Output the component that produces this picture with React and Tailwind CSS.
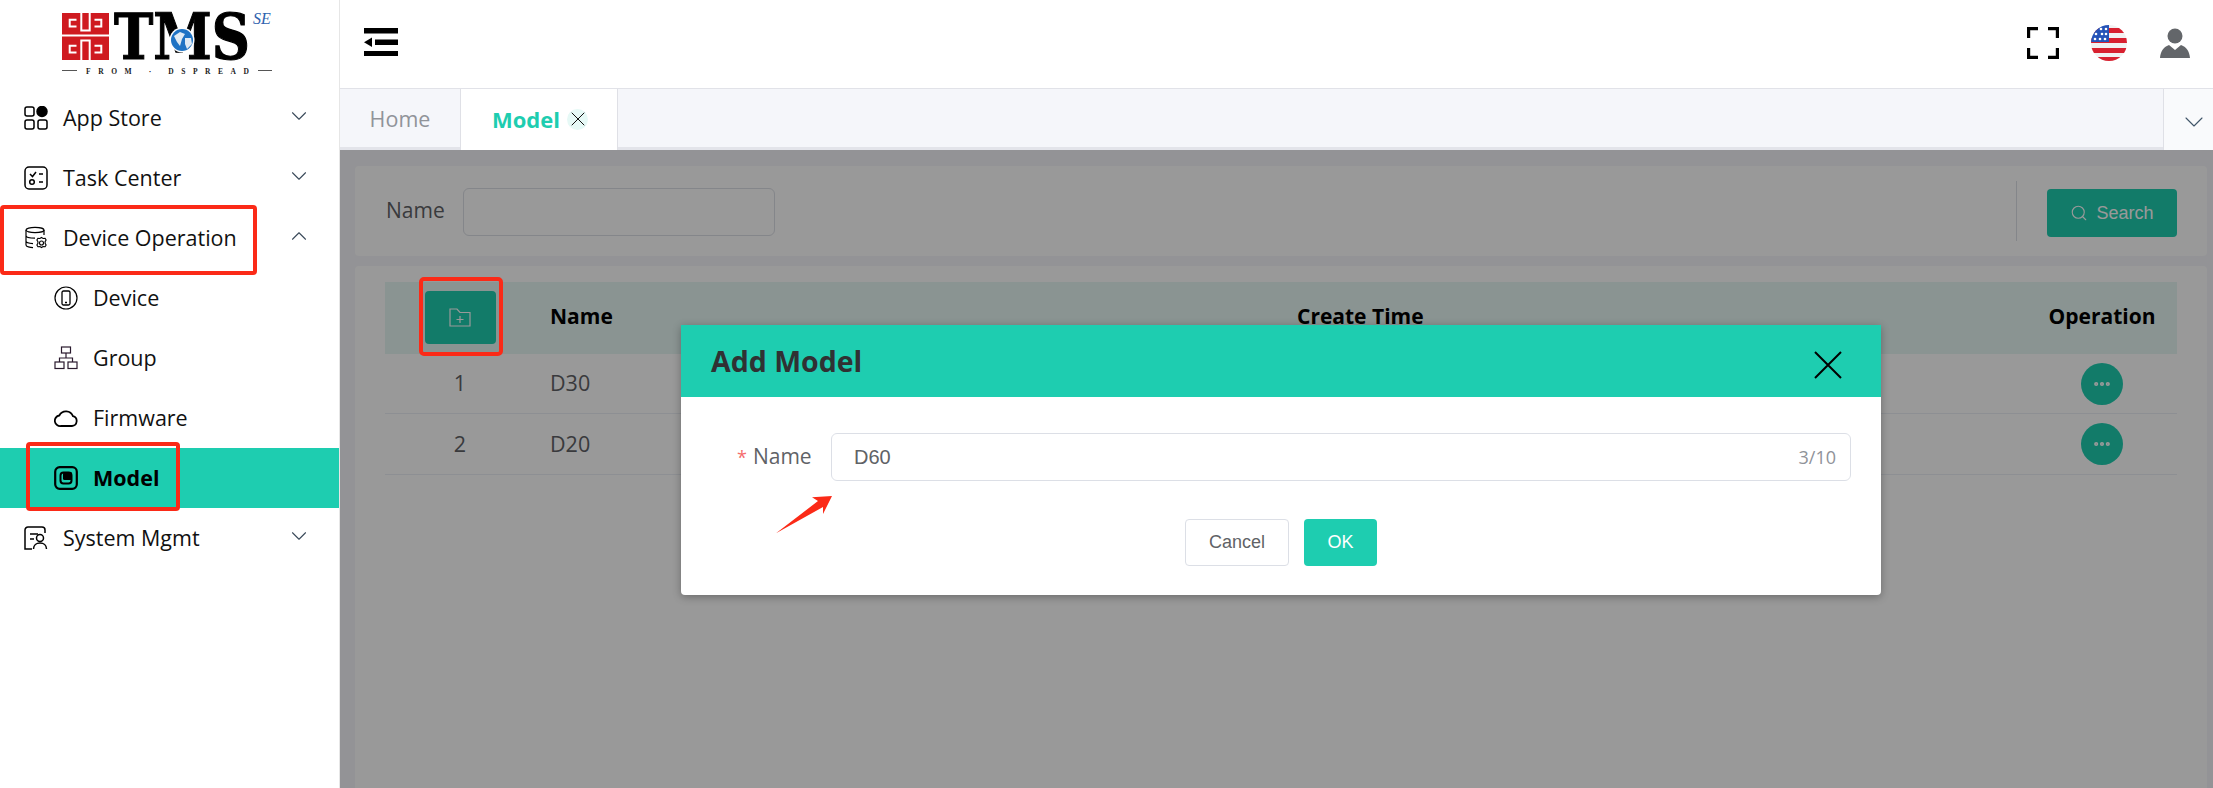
import React from "react";
import { ChevronDown, ChevronUp, X, Search, Ellipsis } from "lucide-react";

const font = "font-['Open_Sans','Noto_Sans',sans-serif]";

function Logo() {
  return (
    <svg width="212" height="72" viewBox="0 0 212 72" className="block overflow-visible">
      <rect x="0" y="0" width="47" height="47" fill="#cf1a20" />
      <g fill="none" stroke="#fff" strokeWidth="2">
        <path d="M0 22.500H47" />
        <path d="M19.300 0V17.500H27.700V0M19.300 47V27.500H27.700V47" />
        <path d="M14.500 6.700H7.700V13.500H14.500M32.500 6.700H39.300V13.500H32.500M14.500 39.500H7.700V32.700H14.500M32.500 39.500H39.300V32.700H32.500" />
      </g>
      <text x="52" y="46" fontFamily="'DejaVu Serif',serif" fontWeight="700" fontSize="63" textLength="136" lengthAdjust="spacingAndGlyphs" fill="#000" stroke="#000" strokeWidth="1.200">TMS</text>
      <circle cx="120" cy="27" r="12.500" fill="#fff" />
      <circle cx="120" cy="27" r="11" fill="#1f73c4" />
      <path d="M112 23l6-4 5 2-3 5-2 7-3-4zM123 25l6 0 1 6-5 5-2-5z" fill="#dfeaf3" />
      <text x="191" y="11" fontFamily="'Liberation Serif',serif" fontStyle="italic" fontSize="16" fill="#2f62ae">SE</text>
      <path d="M0 57.500H15M196 57.500H210" stroke="#555" strokeWidth="1" />
      <text x="24" y="60.500" fontFamily="'Liberation Serif',serif" fontWeight="700" fontSize="7.500" textLength="163" fill="#222">FROM · DSPREAD</text>
    </svg>
  );
}

const S = ({ children, size = 24, className = "" }) => (
  <svg width={size} height={size} viewBox="0 0 24 24" fill="none" stroke="#000" strokeWidth="1.5" className={"shrink-0 " + className}>{children}</svg>
);

const AppIcon = () => (
  <S>
    <rect x="1" y="1" width="9" height="9" rx="2" />
    <circle cx="18" cy="5.500" r="5" fill="#000" />
    <rect x="1" y="14" width="9" height="9" rx="2" />
    <rect x="14" y="14" width="9" height="9" rx="2" />
  </S>
);
const TaskIcon = () => (
  <S>
    <rect x="1" y="1" width="22" height="22" rx="4" />
    <path d="M6 8l2.500 2.500L12 6M15 8h4M15 16h4" />
    <circle cx="8" cy="16" r="2.300" />
  </S>
);
const DbIcon = () => (
  <S>
    <ellipse cx="11" cy="4" rx="9" ry="2.600" strokeWidth="1.200" />
    <path d="M2 4V19c0 1.600 4 2.600 7 2.600M20 4V9M2 9.500c0 1.500 4 2.600 9 2.600M2 15c0 1.400 3 2.400 7 2.600" strokeWidth="1.200" />
    <circle cx="17.500" cy="17" r="2" strokeWidth="1.100" />
    <path d="M17.500 11.500l1.600 1 2-.2 1 1.700-1 1.600v1.800l1 1.600-1 1.700-2-.2-1.600 1-1.600-1-2 .2-1-1.700 1-1.600v-1.800l-1-1.600 1-1.700 2 .2z" strokeWidth="1.100" />
  </S>
);
const PhoneIcon = () => (
  <S>
    <circle cx="12" cy="12" r="11" strokeWidth="1.200" />
    <rect x="8" y="5" width="8" height="14" rx="1.500" strokeWidth="1.300" />
    <path d="M11 16.500h2" />
  </S>
);
const GroupIcon = () => (
  <S>
    <g stroke="#2a1a2e" strokeWidth="1.200">
      <rect x="7.500" y="1" width="9" height="6" />
      <rect x="1" y="16" width="9" height="6.500" />
      <rect x="14" y="16" width="9" height="6.500" />
      <path d="M12 7v5M5.500 16v-4h13v4" />
    </g>
  </S>
);
const CloudIcon = () => (
  <S>
    <path d="M7 20h11a5 5 0 0 0 1-9.800A7.500 7.500 0 0 0 5.300 9.500 5.300 5.300 0 0 0 7 20z" strokeWidth="1.800" />
  </S>
);
const ModelIcon = () => (
  <S>
    <rect x="1.200" y="1.200" width="21.600" height="21.600" rx="4.500" strokeWidth="2.200" />
    <rect x="6.500" y="6.500" width="11" height="11" rx="3" strokeWidth="2" />
    <rect x="9" y="6" width="9" height="8" rx="1.500" fill="#000" stroke="none" />
  </S>
);
const SysIcon = () => (
  <S>
    <path d="M21 7V4a3 3 0 0 0-3-3H4a3 3 0 0 0-3 3v19h7" />
    <path d="M6 8h8M6 13h4" />
    <circle cx="16" cy="12" r="3.500" />
    <path d="M9.500 23c0-4 3-6 6.500-6s6.500 2 6.500 6" />
  </S>
);

function NavItem({ icon, label, chevron, sub, active }) {
  return (
    <div className={"flex h-[60px] items-center " + (active ? "bg-[#1ecdb0] font-bold text-black " : "text-[#111] ") + (sub ? "pl-[54px]" : "pl-6")}>
      {icon}
      <span className="ml-[15px] text-[21.500px]">{label}</span>
      {chevron === "down" && <ChevronDown size={26} strokeWidth={1} color="#3a4a5a" className="mb-[5px] ml-auto mr-[27px]" />}
      {chevron === "up" && <ChevronUp size={26} strokeWidth={1} color="#3a4a5a" className="mb-[5px] ml-auto mr-[27px]" />}
    </div>
  );
}

function Sidebar() {
  return (
    <aside className="relative flex h-full w-[340px] shrink-0 flex-col border-r border-[#e6e6e6] bg-white">
      <div className="flex h-[90px] shrink-0 pl-[62px] pt-[13px]">
        <Logo />
      </div>
      <div className="-mt-[2px] flex flex-col">
        <NavItem icon={<AppIcon />} label="App Store" chevron="down" />
        <NavItem icon={<TaskIcon />} label="Task Center" chevron="down" />
        <NavItem icon={<DbIcon />} label="Device Operation" chevron="up" />
        <NavItem sub icon={<PhoneIcon />} label="Device" />
        <NavItem sub icon={<GroupIcon />} label="Group" />
        <NavItem sub icon={<CloudIcon />} label="Firmware" />
        <NavItem sub active icon={<ModelIcon />} label="Model" />
        <NavItem icon={<SysIcon />} label="System Mgmt" chevron="down" />
      </div>
      <div className="absolute left-0 top-[205px] h-[70px] w-[257px] rounded-[4px] border-[4px] border-[#fb2a17]" />
      <div className="absolute left-[26px] top-[442px] h-[69px] w-[154px] rounded-[4px] border-[4px] border-[#fb2a17]" />
    </aside>
  );
}

function Flag() {
  const stripes = [3, 13, 23, 32];
  return (
    <svg width="36" height="36" viewBox="0 0 36 36">
      <clipPath id="flagclip"><circle cx="18" cy="18" r="18" /></clipPath>
      <g clipPath="url(#flagclip)">
        <rect width="36" height="36" fill="#f1f1f1" />
        {stripes.map((y) => <rect key={y} x="0" y={y} width="36" height="5" fill="#d8202f" />)}
        <rect width="18" height="17" fill="#2553b8" />
        <g fill="#fff">
          <circle cx="10" cy="4" r="1.300" /><circle cx="15" cy="4" r="1.300" />
          <circle cx="5" cy="9" r="1.300" /><circle cx="11" cy="9" r="1.300" /><circle cx="15" cy="9" r="1.300" />
          <circle cx="4" cy="14" r="1.300" /><circle cx="9" cy="14" r="1.300" /><circle cx="14" cy="14" r="1.300" />
        </g>
      </g>
    </svg>
  );
}

function Header() {
  return (
    <header className="flex h-[88px] shrink-0 items-center bg-white pl-[24px]">
      <svg width="34" height="28" viewBox="0 0 34 28" className="mb-[4px]">
        <rect x="0" y="0" width="34" height="5.500" fill="#000" />
        <rect x="11" y="11.500" width="23" height="5.500" fill="#000" />
        <rect x="0" y="23" width="34" height="5.500" fill="#000" />
        <path d="M0 14.200L8 9.500V19z" fill="#000" />
      </svg>
      <svg width="32" height="32" viewBox="0 0 32 32" className="mb-[2px] ml-auto" fill="none" stroke="#000" strokeWidth="3.200">
        <path d="M1.600 11V1.600H11M21 1.600H30.400V11M1.600 21V30.400H11M21 30.400H30.400V21" />
      </svg>
      <div className="mb-[2px] ml-[32px]"><Flag /></div>
      <svg width="30" height="30" viewBox="0 0 30 30" className="mb-[3px] ml-[33px]" fill="#63666a">
        <circle cx="15" cy="8" r="7.500" />
        <path d="M0 30c.5-6 3-11 9-13l6 5 6-5c6 2 8.500 7 9 13z" />
      </svg>
      <div className="w-[23px]" />
    </header>
  );
}

function Tabs() {
  return (
    <div className="flex h-[62px] shrink-0 border-t border-[#e1e2e8] bg-[#f5f6fa]">
      <div className="flex flex-1 border-b-[3px] border-[#e3e4ea]">
        <div className="flex w-[120px] items-center justify-center pt-[2px] text-[21.500px] text-[#909399]">Home</div>
        <div className="-mb-[3px] flex w-[158px] items-center border-x border-[#dfe0e6] bg-white pb-[1px] pl-[31px] text-[22px] font-bold text-[#1ecdb0]">
          Model
          <span className="ml-[7px] flex h-[21px] w-[21px] shrink-0 items-center justify-center rounded-full bg-[#e6f9f6]">
            <X size={24} strokeWidth={1} color="#111" className="shrink-0" />
          </span>
        </div>
      </div>
      <div className="flex w-[50px] shrink-0 items-center justify-center border-l border-[#dfe0e6] bg-[#f9fafc] pl-[10px] pt-[4px]">
        <ChevronDown size={32} strokeWidth={0.8} color="#3f5468" className="shrink-0" />
      </div>
    </div>
  );
}

function FilterCard() {
  return (
    <section className="flex h-[90px] shrink-0 items-center rounded-[4px] bg-white pl-[31px] pr-[30px]">
      <span className="text-[21px] text-[#606266]">Name</span>
      <div className="ml-[18px] mt-[2px] h-[48px] w-[312px] rounded-[6px] border border-[#dcdfe6] bg-white" />
      <div className="ml-auto h-[60px] w-px bg-[#dcdfe6]" />
      <button className="ml-[30px] mt-[4px] flex h-[48px] w-[130px] items-center justify-center gap-[8px] rounded-[4px] bg-[#1ecdb0] font-['Liberation_Sans',sans-serif] text-[18px] text-white">
        <Search size={18} strokeWidth={1.500} />
        Search
      </button>
    </section>
  );
}

function Row({ n, name, h }) {
  return (
    <div className={"flex items-center border-b border-[#ebeef5] text-[21.500px] text-[#606266] " + h}>
      <div className="w-[150px] text-center">{n}</div>
      <div className="w-[15px]" />
      <div className="flex-1">{name}</div>
      <div className="flex w-[150px] justify-center">
        <span className="flex h-[42px] w-[42px] items-center justify-center rounded-full bg-[#1ecdb0]">
          <Ellipsis size={20} strokeWidth={3} color="#fff" />
        </span>
      </div>
    </div>
  );
}

function TableCard() {
  return (
    <section className="flex min-h-0 flex-1 flex-col rounded-t-[4px] bg-white px-[30px] pt-[16px]">
      <div className="flex h-[72px] shrink-0 items-center bg-[#e6f7f3] pb-[2px] text-[21px] font-bold text-black">
        <div className="flex w-[150px] justify-center">
          <button className="flex h-[53px] w-[71px] items-center justify-center rounded-[4px] bg-[#1ecdb0]">
            <svg width="22" height="19" viewBox="0 0 22 19" fill="none" stroke="#fff" strokeWidth="1.200">
              <path d="M1 18V1h7l3 3.500h10V18z" />
              <path d="M11 8v7M7.500 11.500h7" />
            </svg>
          </button>
        </div>
        <div className="w-[15px]" />
        <div className="flex-1">Name</div>
        <div className="w-[730px]">Create Time</div>
        <div className="w-[150px] text-center">Operation</div>
      </div>
      <Row n="1" name="D30" h="h-[60px]" />
      <Row n="2" name="D20" h="h-[61px]" />
    </section>
  );
}

function Modal() {
  return (
    <div className="ml-[341px] mt-[175px] h-[270px] w-[1200px] overflow-hidden rounded-b-[4px] bg-white shadow-[0_2px_8px_rgba(0,0,0,0.3)]">
      <div className="flex h-[72px] items-center justify-between bg-[#1ecdb0] pl-[30px] pr-[39px]">
        <span className="text-[28.500px] font-bold text-[#303133]">Add Model</span>
        <svg width="28" height="28" viewBox="0 0 28 28" className="mt-[8px]" fill="none" stroke="#000" strokeWidth="2">
          <path d="M1 1L27 27M27 1L1 27" />
        </svg>
      </div>
      <div className="flex items-center pl-[56px] pr-[30px] pt-[36px]">
        <span className="w-[94px] shrink-0 text-[21px] text-[#606266]"><span className="mr-[6px] text-[18px] text-[#f56c6c]">*</span>Name</span>
        <div className="flex h-[48px] flex-1 items-center justify-between rounded-[6px] border border-[#dcdfe6] pl-[22px] pr-[14px] font-['Liberation_Sans',sans-serif] text-[20px] text-[#606266]">
          D60
          <span className={"text-[18px] text-[#909399] " + font}>3/10</span>
        </div>
      </div>
      <div className="flex justify-center gap-[15px] pt-[38px] font-['Liberation_Sans',sans-serif] text-[18px]">
        <button className="h-[47px] w-[104px] rounded-[4px] border border-[#dcdfe6] bg-white text-[#606266]">Cancel</button>
        <button className="h-[47px] w-[73px] rounded-[4px] bg-[#1ecdb0] text-white">OK</button>
      </div>
    </div>
  );
}

function Arrow() {
  return (
    <svg width="60" height="42" viewBox="0 0 60 42" className="absolute left-[434px] top-[344px]">
      <path d="M2 39.300L44 7l-6-3.700L58 2l-9 18v-7z" fill="#fb2a17" />
    </svg>
  );
}

export default function App() {
  return (
    <div className={"flex h-[788px] w-[2213px] overflow-hidden bg-white " + font}>
      <Sidebar />
      <main className="relative flex min-w-0 flex-1 flex-col">
        <Header />
        <Tabs />
        <div className="flex min-h-0 flex-1 flex-col gap-[10px] bg-[#f5f6fa] pl-[15px] pr-[6px] pt-[16px]">
          <FilterCard />
          <TableCard />
        </div>
        <div className="absolute bottom-0 left-0 right-0 top-[150px] flex bg-black/40">
          <div className="absolute left-[79px] top-[127px] h-[79px] w-[84px] rounded-[5px] border-[4px] border-[#fb2a17]" />
          <Modal />
          <Arrow />
        </div>
      </main>
    </div>
  );
}
